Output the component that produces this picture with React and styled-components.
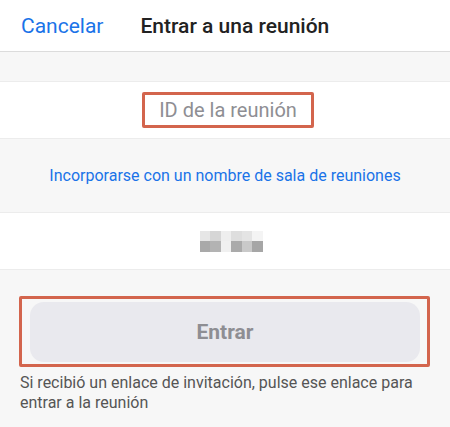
import React from 'react';
import styled, { createGlobalStyle } from 'styled-components';

const GlobalStyle = createGlobalStyle`
  body {
    margin: 0;
    background-color: #f7f7f7;
    font-family: Roboto, "Noto Sans", sans-serif;
  }
`;

const Page = styled.div`
  width: 450px;
  height: 427px;
  overflow: hidden;
  background-color: #f7f7f7;
`;

const Header = styled.header`
  height: 51px;
  display: flex;
  align-items: center;
  gap: 37px;
  padding: 0 21px;
  background-color: #ffffff;
  border-bottom: 1px solid #dcdcdc;
`;

const CancelLink = styled.span`
  font-size: 21px;
  color: #1a73e8;
`;

const Title = styled.h1`
  margin: 0;
  font-size: 21px;
  font-weight: 500;
  color: #222222;
`;

const Spacer = styled.div`
  height: ${(p) => p.h}px;
`;

const WhiteRow = styled.div`
  height: ${(p) => p.h}px;
  display: flex;
  align-items: center;
  justify-content: center;
  background-color: #ffffff;
  border-top: 1px solid #ececec;
  border-bottom: 1px solid #ececec;
`;

const Highlight = styled.div`
  border: 3px solid #d3654d;
  border-radius: 2px;
  padding: ${(p) => p.pad || '0'};
  margin-left: ${(p) => p.shift || 0}px;
  box-sizing: border-box;
`;

const Placeholder = styled.div`
  width: 164px;
  height: 30px;
  display: flex;
  align-items: center;
  justify-content: center;
  font-size: 20px;
  color: #8e8e93;
`;

const LinkRow = styled.div`
  height: 73px;
  display: flex;
  align-items: center;
  justify-content: center;
  font-size: 16px;
  color: #1a73e8;
`;

const Mosaic = styled.div`
  display: grid;
  grid-template-columns: repeat(6, 10.5px);
  grid-template-rows: repeat(2, 10.5px);
  margin-left: 12px;
`;

const Cell = styled.div`
  background-color: ${(p) => p.c};
`;

const ButtonArea = styled.div`
  padding: 26px 20px 0 19px;
`;

const EnterButton = styled.button`
  width: 100%;
  height: 60px;
  border: none;
  border-radius: 14px;
  background-color: #e9e9ee;
  font-family: Roboto, "Noto Sans", sans-serif;
  font-size: 21px;
  font-weight: 700;
  color: #8e8e93;
  display: block;
`;

const Hint = styled.p`
  margin: 6px 0 0 20px;
  width: 420px;
  font-size: 16px;
  line-height: 20px;
  color: #555555;
`;

const mosaic = [
  '#e6e6e6', '#d6d6d6', '#eeeeee', '#dedede', '#e4e4e4', '#f4f4f4',
  '#a9a9a9', '#b3b3b3', '#f0f0f0', '#aaaaaa', '#c9c9c9', '#a6a6a6',
];

export default function App() {
  return (
    <Page>
      <GlobalStyle />
      <Header>
        <CancelLink>Cancelar</CancelLink>
        <Title>Entrar a una reunión</Title>
      </Header>
      <Spacer h={29} />
      <WhiteRow h={56}>
        <Highlight pad="0 1px" shift={6}>
          <Placeholder>ID de la reunión</Placeholder>
        </Highlight>
      </WhiteRow>
      <LinkRow>Incorporarse con un nombre de sala de reuniones</LinkRow>
      <WhiteRow h={56}>
        <Mosaic>
          {mosaic.map((c, i) => (
            <Cell key={i} c={c} />
          ))}
        </Mosaic>
      </WhiteRow>
      <ButtonArea>
        <Highlight pad="3px 7px 2px 8px">
          <EnterButton>Entrar</EnterButton>
        </Highlight>
      </ButtonArea>
      <Hint>
        Si recibió un enlace de invitación, pulse ese enlace para entrar a la
        reunión
      </Hint>
    </Page>
  );
}
